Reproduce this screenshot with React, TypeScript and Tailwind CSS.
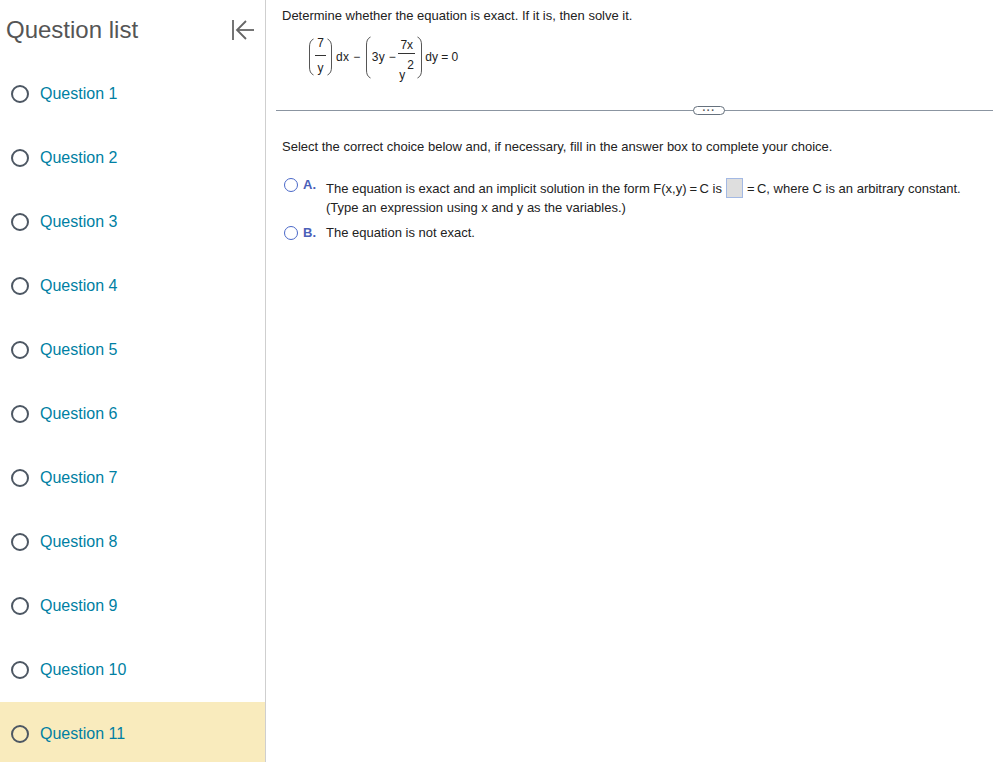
const questions = ['Question 1', 'Question 2', 'Question 3', 'Question 4', 'Question 5', 'Question 6', 'Question 7', 'Question 8', 'Question 9', 'Question 10', 'Question 11']

function Paren({ h, flip }: { h: number; flip?: boolean }) {
  return (
    <svg width="6" height={h} viewBox={`0 0 6 ${h}`} fill="none" stroke="#555" strokeWidth="1" className={flip ? 'block shrink-0 -scale-x-100' : 'block shrink-0'}>
      <path d={`M5.5 1 C2.5 2.5 1.5 5 1.5 9 V${h - 9} C1.5 ${h - 5} 2.5 ${h - 2.5} 5.5 ${h - 1}`} />
    </svg>
  )
}

export default function App() {
  return (
    <div className="flex h-[762px] w-[993px] overflow-hidden bg-white font-['Liberation_Sans',Arial,sans-serif]">
      {/* question list */}
      <aside className="flex w-[266px] shrink-0 flex-col border-r border-[#cfcfcf]">
        <div className="flex h-[62px] shrink-0 items-center justify-between pr-[11px] pb-[2px] pl-[6px]">
          <h2 className="text-2xl font-normal text-[#555]">Question list</h2>
          <svg width="22" height="20" viewBox="0 0 22 20" fill="none" stroke="#666" strokeWidth="1.8">
            <path d="M1 0v20" />
            <path d="M22 10H5" />
            <path d="M14 1l-9 9 9 9" />
          </svg>
        </div>
        {questions.map((q, i) => (
          <div key={q} className={i === 10 ? 'flex h-16 shrink-0 items-center gap-[11px] bg-[#f9ebbd] pl-[11px]' : 'flex h-16 shrink-0 items-center gap-[11px] pl-[11px]'}>
            <span className="h-[18px] w-[18px] rounded-full border-2 border-[#4d5763]" />
            <span className="text-base text-[#007fa3]">{q}</span>
          </div>
        ))}
      </aside>

      {/* question body */}
      <main className="min-w-0 flex-1 text-[13px] leading-[19px] text-[#222]">
        <p className="pt-[6px] pl-4">Determine whether the equation is exact. If it is, then solve it.</p>
        <div className="mt-[9px] ml-[42px] flex h-[46px] items-center text-xs">
          <Paren h={38} />
          <div className="mb-[3px] flex w-[13px] flex-col items-center leading-[24px]">
            <span>7</span>
            <span className="h-px w-[11px] bg-[#333]" />
            <span>y</span>
          </div>
          <Paren h={38} flip />
          <span className="ml-[3px] tracking-[0.4px]">dx −</span>
          <span className="ml-[4px]"><Paren h={43} /></span>
          <span className="ml-[1px] tracking-[0.4px]">3y −</span>
          <div className="mt-[5px] ml-[2px] flex w-[17px] flex-col leading-[16px]">
            <span className="text-center">7x</span>
            <span className="h-px w-[17px] bg-[#333]" />
            <span className="relative ml-[1px] pt-[14px] leading-[14px]">
              y<span className="absolute top-[4px] left-[8px]">2</span>
            </span>
          </div>
          <span className="ml-[2px]"><Paren h={43} flip /></span>
          <span className="ml-[2px]">dy = 0</span>
        </div>

        <div className="relative mt-[30px] ml-[10px] h-px bg-[#8b95a1]">
          <span className="absolute top-[-4px] left-[417px] flex h-[9px] w-[32px] items-center justify-center rounded-full border border-[#66717d] bg-white text-[10px] leading-none font-bold tracking-[1px] text-[#555]">···</span>
        </div>

        <p className="mt-[26px] pl-4">Select the correct choice below and, if necessary, fill in the answer box to complete your choice.</p>

        <div className="mt-[22px] flex items-start pl-[18px]">
          <span className="h-[14px] w-[14px] shrink-0 rounded-full border-[1.5px] border-[#4a68c8]" />
          <span className="ml-[5px] w-[23px] leading-[14px] font-bold text-[#4a60b8]">A.</span>
          <div>
            <div className="flex h-5 items-center">
              <span>The equation is exact and an implicit solution in the form F(x,y)<span className="tracking-[-0.6px]"> = </span>C is</span>
              <span className="mx-1 h-5 w-[17px] border border-[#a3b9e4] bg-[#dedede]" />
              <span><span className="tracking-[-0.6px]">= </span>C, where C is an arbitrary constant.</span>
            </div>
            <div>(Type an expression using x and y as the variables.)</div>
          </div>
        </div>

        <div className="mt-[6px] flex items-center pl-[18px]">
          <span className="h-[14px] w-[14px] shrink-0 rounded-full border-[1.5px] border-[#4a68c8]" />
          <span className="ml-[5px] w-[23px] font-bold text-[#4a60b8]">B.</span>
          <span>The equation is not exact.</span>
        </div>
      </main>
    </div>
  )
}
